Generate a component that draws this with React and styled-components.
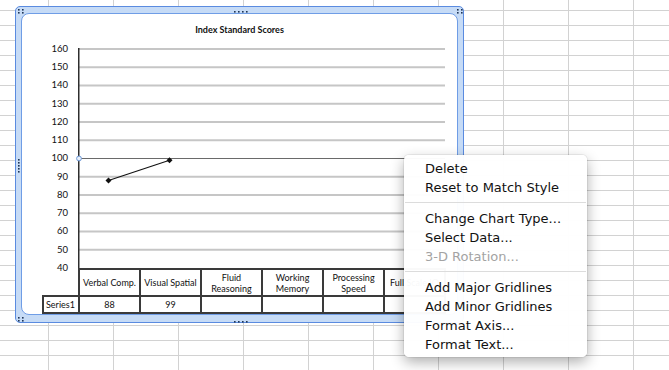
import React from "react";
import styled, { createGlobalStyle } from "styled-components";

const GlobalStyle = createGlobalStyle`
  html, body {
    margin: 0;
    padding: 0;
    background: #fff;
  }
`;

const axisValues = [160, 150, 140, 130, 120, 110, 100, 90, 80, 70, 60, 50, 40];
const categories = [
  ["Verbal Comp."],
  ["Visual Spatial"],
  ["Fluid", "Reasoning"],
  ["Working", "Memory"],
  ["Processing", "Speed"],
  ["Full Scale IQ"],
];
const series = [88, 99, null, null, null, null];

const STEP = 18.25;
const COL = 61;

const menu = [
  { label: "Delete" },
  { label: "Reset to Match Style" },
  { sep: true },
  { label: "Change Chart Type..." },
  { label: "Select Data..." },
  { label: "3-D Rotation...", disabled: true },
  { sep: true },
  { label: "Add Major Gridlines" },
  { label: "Add Minor Gridlines" },
  { label: "Format Axis..." },
  { label: "Format Text..." },
];

function yFor(v) {
  return 1 + (160 - v) * (STEP / 10);
}

function Plot() {
  const pts = series
    .map((v, i) => (v == null ? null : [i * COL + COL / 2, yFor(v)]))
    .filter(Boolean);
  return (
    <PlotSvg width="368" height="220" viewBox="0 0 368 220">
      {axisValues.slice(0, 12).map((v, i) => (
        <line
          key={v}
          x1="1"
          x2="367"
          y1={1 + i * STEP}
          y2={1 + i * STEP}
          stroke={v === 100 ? "#6a6a6a" : "#c6c6c6"}
          strokeWidth={v === 100 ? 1.2 : 2}
        />
      ))}
      <line x1="0.75" x2="0.75" y1="0" y2="220" stroke="#2e2e2e" strokeWidth="1.5" />
      <circle cx="1" cy={yFor(100)} r="2.4" fill="#e8f0fb" stroke="#6c97d6" strokeWidth="1" />
      <polyline
        points={pts.map((p) => p.join(",")).join(" ")}
        fill="none"
        stroke="#111"
        strokeWidth="1.1"
      />
      {pts.map(([x, y]) => (
        <polygon
          key={x}
          points={`${x},${y - 3} ${x + 3},${y} ${x},${y + 3} ${x - 3},${y}`}
          fill="#111"
        />
      ))}
    </PlotSvg>
  );
}

function Dots({ cols, rows }) {
  const out = [];
  for (let r = 0; r < rows; r++)
    for (let c = 0; c < cols; c++)
      out.push(<rect key={`${r}-${c}`} x={c * 4} y={r * 3} width="1.6" height="1.6" fill="#1f3556" />);
  return (
    <svg width={cols * 4} height={rows * 3}>
      {out}
    </svg>
  );
}

export default function App() {
  return (
    <>
      <GlobalStyle />
      <Sheet>
        <ChartFrame>
          <Handle $x={2} $y={2}><Dots cols={2} rows={2} /></Handle>
          <Handle $x={218} $y={2}><Dots cols={4} rows={1} /></Handle>
          <Handle $x={441} $y={2}><Dots cols={2} rows={2} /></Handle>
          <Handle $x={2} $y={152}><Dots cols={1} rows={5} /></Handle>
          <Handle $x={2} $y={310}><Dots cols={2} rows={2} /></Handle>
          <Handle $x={218} $y={312}><Dots cols={4} rows={1} /></Handle>
          <ChartInner>
            <Title>Index Standard Scores</Title>
            <PlotBody>
              <PlotRow>
                <AxisLabels>
                  {axisValues.map((v) => (
                    <AxisLabel key={v}>{v}</AxisLabel>
                  ))}
                </AxisLabels>
                <Plot />
              </PlotRow>
              <DataTable>
                <colgroup>
                  <col style={{ width: 36 }} />
                  {categories.map((c, i) => (
                    <col key={i} style={{ width: COL }} />
                  ))}
                </colgroup>
                <tbody>
                  <HeaderRow>
                    <EmptyCell />
                    {categories.map((lines, i) => (
                      <Cell key={i}>
                        {lines.map((l, j) => (
                          <div key={j}>{l}</div>
                        ))}
                      </Cell>
                    ))}
                  </HeaderRow>
                  <ValueRow>
                    <SeriesCell>Series1</SeriesCell>
                    {series.map((v, i) => (
                      <Cell key={i}>{v ?? ""}</Cell>
                    ))}
                  </ValueRow>
                </tbody>
              </DataTable>
            </PlotBody>
          </ChartInner>
        </ChartFrame>

        <ContextMenu>
          {menu.map((m, i) =>
            m.sep ? (
              <Separator key={i} />
            ) : (
              <MenuItem key={i} $disabled={m.disabled}>
                {m.label}
              </MenuItem>
            )
          )}
        </ContextMenu>
      </Sheet>
    </>
  );
}

const Sheet = styled.div`
  position: relative;
  width: 669px;
  height: 370px;
  overflow: hidden;
  background-color: #fff;
  background-image: linear-gradient(to right, #d2d2d2 1px, transparent 1px),
    linear-gradient(to bottom, #d2d2d2 1px, transparent 1px);
  background-size: 65px 15px;
  background-position: 48px 10px;
`;

const ChartFrame = styled.div`
  position: absolute;
  left: 15px;
  top: 6px;
  width: 449px;
  height: 317px;
  box-sizing: border-box;
  padding: 6px 5px 7px 5px;
  border: 1px solid #5a8be0;
  border-radius: 5px;
  background: #c6dbf6;
  display: flex;
`;

const Handle = styled.div`
  position: absolute;
  left: ${(p) => p.$x}px;
  top: ${(p) => p.$y}px;
  line-height: 0;
`;

const ChartInner = styled.div`
  flex: 1;
  display: flex;
  flex-direction: column;
  background: #fff;
  border: 1px solid #6f9de6;
  border-radius: 8px;
  font-family: Lato, "Liberation Sans", sans-serif;
  color: #111;
`;

const Title = styled.div`
  margin-top: 10px;
  height: 12px;
  line-height: 12px;
  font-size: 9px;
  font-weight: 700;
  text-align: center;
`;

const PlotBody = styled.div`
  padding-left: 20px;
  margin-top: 12px;
`;

const PlotRow = styled.div`
  display: flex;
  align-items: flex-start;
`;

const AxisLabels = styled.div`
  width: 26px;
  margin-right: 10px;
  margin-top: -8.125px;
  margin-bottom: -9.125px;
  display: flex;
  flex-direction: column;
`;

const AxisLabel = styled.div`
  height: 18.25px;
  line-height: 18.25px;
  font-size: 9.5px;
  text-align: right;
`;

const PlotSvg = styled.svg`
  display: block;
  overflow: visible;
`;

const DataTable = styled.table`
  border-collapse: collapse;
  table-layout: fixed;
  width: 402px;
  font-size: 9px;
  line-height: 11px;
`;

const HeaderRow = styled.tr`
  height: 27px;
`;

const ValueRow = styled.tr`
  height: 17px;
`;

const Cell = styled.td`
  border: 2px solid #3a3a3a;
  padding: 0;
  text-align: center;
  vertical-align: middle;
  white-space: nowrap;
  overflow: hidden;
`;

const EmptyCell = styled.td`
  border-top: none;
  border-left: none;
  border-bottom: 2px solid #3a3a3a;
  padding: 0;
`;

const SeriesCell = styled(Cell)`
  text-align: left;
  padding-left: 2px;
`;

const ContextMenu = styled.div`
  position: absolute;
  left: 404px;
  top: 155px;
  width: 183px;
  box-sizing: border-box;
  padding: 3.5px 0;
  background: rgba(255, 255, 255, 0.97);
  border-radius: 5px;
  box-shadow: 0 5px 14px rgba(0, 0, 0, 0.32), 0 0 0 1px rgba(0, 0, 0, 0.06);
  font-family: "DejaVu Sans", sans-serif;
  font-size: 13px;
`;

const MenuItem = styled.div`
  height: 19px;
  line-height: 19px;
  padding-left: 21px;
  color: ${(p) => (p.$disabled ? "#a3a3a3" : "#111")};
  white-space: nowrap;
`;

const Separator = styled.div`
  height: 1px;
  margin: 5.5px 1px;
  background: #dcdcdc;
`;
